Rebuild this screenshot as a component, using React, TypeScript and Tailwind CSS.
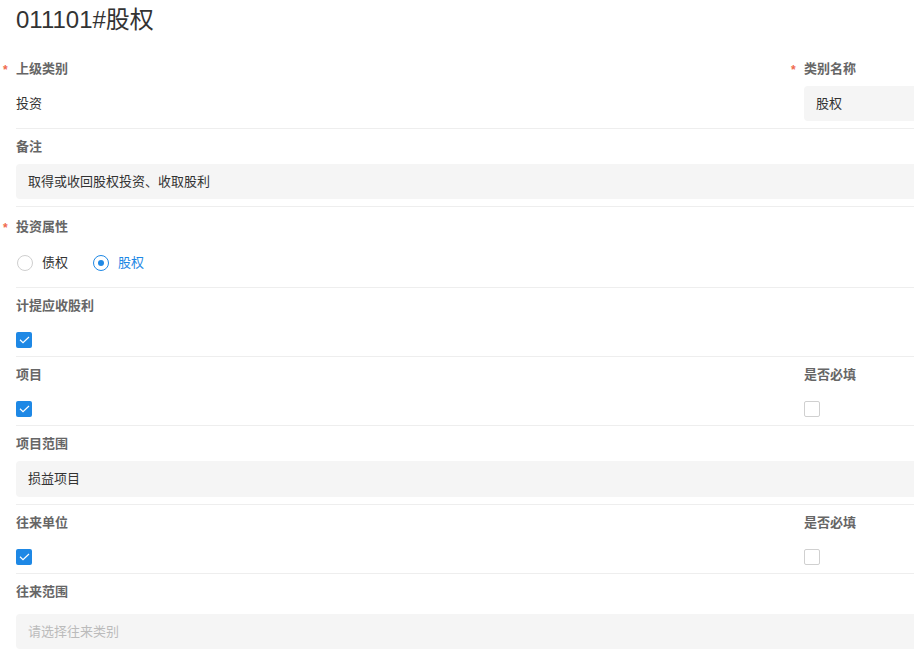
import React from 'react';

const font = { fontFamily: '"Liberation Sans", "Noto Sans CJK SC", sans-serif' };

function Label({ text, required }: { text: string; required?: boolean }) {
  return (
    <div className="relative h-5 text-[13px] font-semibold leading-5 text-[#666]">
      {required && <span className="absolute -left-[13px] top-[1px] text-[12px] text-[#ef6a4f]">*</span>}
      {text}
    </div>
  );
}

function Field({ value, placeholder, className = '' }: { value?: string; placeholder?: string; className?: string }) {
  return (
    <div className={`flex h-[35px] items-center rounded bg-[#f5f5f5] px-3 text-[13px] ${className}`}>
      {value ? <span className="text-[#333]">{value}</span> : <span className="text-[#bbb]">{placeholder}</span>}
    </div>
  );
}

function Check({ checked }: { checked?: boolean }) {
  if (!checked) return <div className="h-4 w-4 rounded-[2px] border border-[#d0d0d0] bg-white" />;
  return (
    <div className="flex h-4 w-4 items-center justify-center rounded-[2px] bg-[#1e88e5]">
      <svg width="11" height="8" viewBox="0 0 11 8" fill="none">
        <path d="M1 3.8 4 6.6 10 1" stroke="white" strokeWidth="1.2" />
      </svg>
    </div>
  );
}

function Radio({ label, checked }: { label: string; checked?: boolean }) {
  return (
    <div className="flex items-center gap-[9px] text-[13px]">
      {checked ? (
        <div className="flex h-4 w-4 items-center justify-center rounded-full border border-[#1e88e5] bg-white">
          <div className="h-[6px] w-[6px] rounded-full bg-[#1e88e5]" />
        </div>
      ) : (
        <div className="h-4 w-4 rounded-full border border-[#cfcfcf] bg-white" />
      )}
      <span className={checked ? 'text-[#1e88e5]' : 'text-[#333]'}>{label}</span>
    </div>
  );
}

export default function App() {
  return (
    <div className="h-[663px] w-[914px] overflow-hidden bg-white" style={font}>
      <div className="w-[1600px] pl-4">
        <h1 className="pt-1 text-[24px] leading-8 text-[#333]">011101#股权</h1>

        <div className="mt-[15px] grid grid-cols-[788px_1fr] border-b border-[#eeeeee] pt-2 pb-[7px]">
          <div>
            <Label text="上级类别" required />
            <div className="mt-[7px] flex h-[35px] items-center text-[13px] text-[#333]">投资</div>
          </div>
          <div>
            <Label text="类别名称" required />
            <Field value="股权" className="mt-[7px]" />
          </div>
        </div>

        <div className="border-b border-[#eeeeee] pt-2 pb-[7px]">
          <Label text="备注" />
          <Field value="取得或收回股权投资、收取股利" className="mt-[7px]" />
        </div>

        <div className="border-b border-[#eeeeee] pt-[10px] pb-[7px]">
          <Label text="投资属性" required />
          <div className="mt-2 flex h-[35px] items-center gap-[25px] pl-[1px]">
            <Radio label="债权" />
            <Radio label="股权" checked />
          </div>
        </div>

        <div className="border-b border-[#eeeeee] pt-2 pb-2">
          <Label text="计提应收股利" />
          <div className="mt-4">
            <Check checked />
          </div>
        </div>

        <div className="grid grid-cols-[788px_1fr] border-b border-[#eeeeee] pt-2 pb-2">
          <div>
            <Label text="项目" />
            <div className="mt-4">
              <Check checked />
            </div>
          </div>
          <div>
            <Label text="是否必填" />
            <div className="mt-4">
              <Check />
            </div>
          </div>
        </div>

        <div className="border-b border-[#eeeeee] pt-2 pb-[7px]">
          <Label text="项目范围" />
          <Field value="损益项目" className="mt-[7px] h-[36px]" />
        </div>

        <div className="grid grid-cols-[788px_1fr] border-b border-[#eeeeee] pt-2 pb-2">
          <div>
            <Label text="往来单位" />
            <div className="mt-4">
              <Check checked />
            </div>
          </div>
          <div>
            <Label text="是否必填" />
            <div className="mt-4">
              <Check />
            </div>
          </div>
        </div>

        <div className="pt-2">
          <Label text="往来范围" />
          <Field placeholder="请选择往来类别" className="mt-3" />
        </div>
      </div>
    </div>
  );
}
